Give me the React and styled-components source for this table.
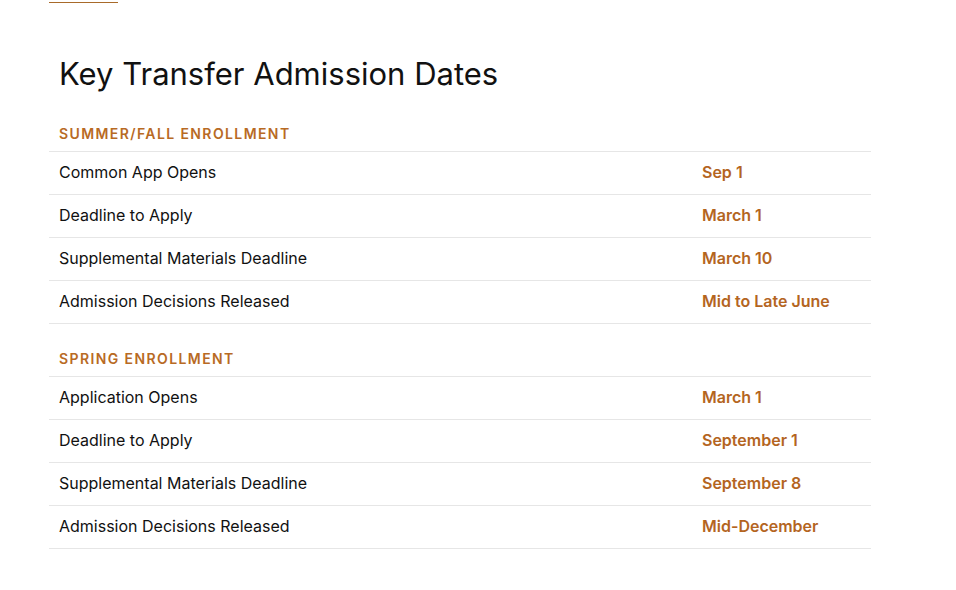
import React from 'react'
import styled, { createGlobalStyle } from 'styled-components'

const GlobalStyle = createGlobalStyle`
  html, body {
    margin: 0;
    padding: 0;
    background: #ffffff;
  }
  body {
    font-family: Inter, "Noto Sans", Arial, sans-serif;
    color: #111111;
    overflow: hidden;
  }
`

const Page = styled.div`
  width: 822px;
  padding-left: 49px;
`

const Breadcrumb = styled.div`
  display: flex;
  gap: 6px;
  height: 20px;
  margin-top: -17px;
  font-size: 14px;
  line-height: 18px;
  color: #222;
`

const CrumbLink = styled.a`
  color: #222;
  text-decoration: none;
  border-bottom: 1px solid #a86a2a;
`

const Title = styled.h1`
  margin: 51px 0 0;
  padding: 0 10px;
  font-size: 31px;
  line-height: 40px;
  font-weight: 400;
  color: #111;
`

const Section = styled.section`
  margin-top: ${p => p.$first ? '31px' : '26px'};
`

const SectionHeader = styled.h2`
  margin: 0;
  padding: 0 10px 8px;
  font-size: 14px;
  line-height: 18px;
  font-weight: 600;
  letter-spacing: 1.4px;
  text-transform: uppercase;
  color: #b86a24;
`

const Table = styled.div`
  border-top: 1px solid #e6e6e6;
`

const Row = styled.div`
  display: grid;
  grid-template-columns: 643px 1fr;
  align-items: center;
  height: 40px;
  padding: 0 10px 2px;
  border-bottom: 1px solid #e6e6e6;
  font-size: 16px;
`

const Label = styled.span`
  color: #111;
`

const DateValue = styled.span`
  color: #b4651f;
  font-weight: 600;
`

const sections = [
  {
    title: 'Summer/Fall Enrollment',
    rows: [
      ['Common App Opens', 'Sep 1'],
      ['Deadline to Apply', 'March 1'],
      ['Supplemental Materials Deadline', 'March 10'],
      ['Admission Decisions Released', 'Mid to Late June'],
    ],
  },
  {
    title: 'Spring Enrollment',
    rows: [
      ['Application Opens', 'March 1'],
      ['Deadline to Apply', 'September 1'],
      ['Supplemental Materials Deadline', 'September 8'],
      ['Admission Decisions Released', 'Mid-December'],
    ],
  },
]

function App() {
  return (
    <>
      <GlobalStyle />
      <Page>
        <Breadcrumb>
          <CrumbLink href="#">Admission</CrumbLink>
          <span>/</span>
          <span>Transfer</span>
        </Breadcrumb>
        <Title>Key Transfer Admission Dates</Title>
        {sections.map((section, i) => (
          <Section key={section.title} $first={i === 0}>
            <SectionHeader>{section.title}</SectionHeader>
            <Table>
              {section.rows.map(([label, date]) => (
                <Row key={label}>
                  <Label>{label}</Label>
                  <DateValue>{date}</DateValue>
                </Row>
              ))}
            </Table>
          </Section>
        ))}
      </Page>
    </>
  )
}

export default App
